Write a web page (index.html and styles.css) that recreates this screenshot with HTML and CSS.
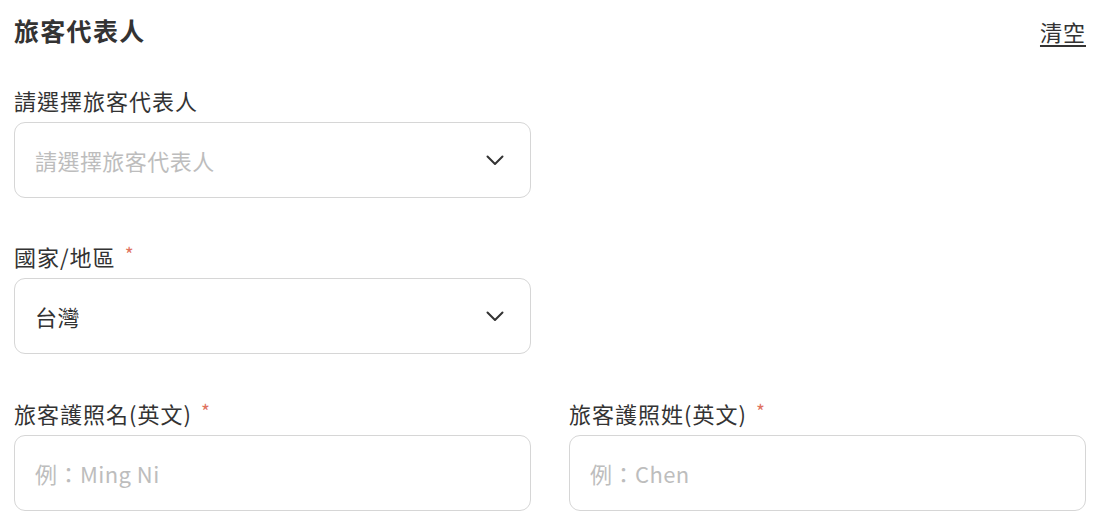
FILE: index.html
```html
<!DOCTYPE html>
<html lang="zh-Hant">
<head>
<meta charset="utf-8">
<title>旅客代表人</title>
<link rel="stylesheet" href="styles.css">
</head>
<body>
<div class="page">
  <div class="header">
    <h2 class="title">旅客代表人</h2>
    <a class="clear" href="#">清空</a>
  </div>
  <div class="form">
    <div class="field left">
      <div class="label">請選擇旅客代表人</div>
      <div class="box select">
        <span class="placeholder">請選擇旅客代表人</span>
        <svg class="chev" width="18" height="11" viewBox="0 0 18 11"><path d="M1.5 1.5 L9 9 L16.5 1.5" fill="none" stroke="#333" stroke-width="2" stroke-linecap="round" stroke-linejoin="round"/></svg>
      </div>
    </div>
    <div class="field left">
      <div class="label">國家/地區<span class="req">*</span></div>
      <div class="box select">
        <span class="value">台灣</span>
        <svg class="chev" width="18" height="11" viewBox="0 0 18 11"><path d="M1.5 1.5 L9 9 L16.5 1.5" fill="none" stroke="#333" stroke-width="2" stroke-linecap="round" stroke-linejoin="round"/></svg>
      </div>
    </div>
    <div class="field left">
      <div class="label">旅客護照名(英文)<span class="req">*</span></div>
      <div class="box input">
        <span class="placeholder">例：Ming Ni</span>
      </div>
    </div>
    <div class="field right">
      <div class="label">旅客護照姓(英文)<span class="req">*</span></div>
      <div class="box input">
        <span class="placeholder">例：Chen</span>
      </div>
    </div>
  </div>
</div>
</body>
</html>
```

FILE: styles.css
```css
html, body {
  margin: 0;
  padding: 0;
  background: #fff;
}
body {
  font-family: "Noto Sans CJK TC", "Noto Sans", sans-serif;
  color: #333;
}
.page {
  padding: 12px 18px 0 14px;
}
.header {
  display: flex;
  justify-content: space-between;
  align-items: center;
  height: 36px;
}
.title {
  margin: 0;
  font-size: 25px;
  font-weight: 700;
  letter-spacing: 1.3px;
  line-height: 36px;
  color: #333;
}
.clear {
  font-size: 22px;
  letter-spacing: 1px;
  line-height: 36px;
  color: #333;
  text-decoration: underline;
  text-underline-offset: 4px;
  text-decoration-thickness: 1.5px;
  margin-top: 2px;
}
.form {
  margin-top: 38px;
  display: grid;
  grid-template-columns: 1fr 1fr;
  column-gap: 38px;
  row-gap: 44px;
}
.left {
  grid-column: 1;
}
.right {
  grid-column: 2;
  grid-row: 3;
}
.field:nth-child(3),
.field:nth-child(4) {
  margin-top: 1px;
}
.label {
  font-size: 22px;
  letter-spacing: 1px;
  line-height: 28px;
  height: 28px;
  margin-bottom: 8px;
  color: #333;
}
.req {
  color: #e0735f;
  font-size: 19px;
  line-height: 0;
  vertical-align: 4px;
  margin-left: 9px;
}
.box {
  box-sizing: border-box;
  height: 76px;
  border: 1px solid #d6d6d6;
  border-radius: 11px;
  display: flex;
  align-items: center;
  justify-content: space-between;
  padding: 0 26px 0 20px;
  font-size: 22px;
  letter-spacing: 0.45px;
}
.placeholder {
  color: #bdbdbd;
  font-weight: 400;
}
.value {
  color: #333;
}
.chev {
  display: block;
}
```
